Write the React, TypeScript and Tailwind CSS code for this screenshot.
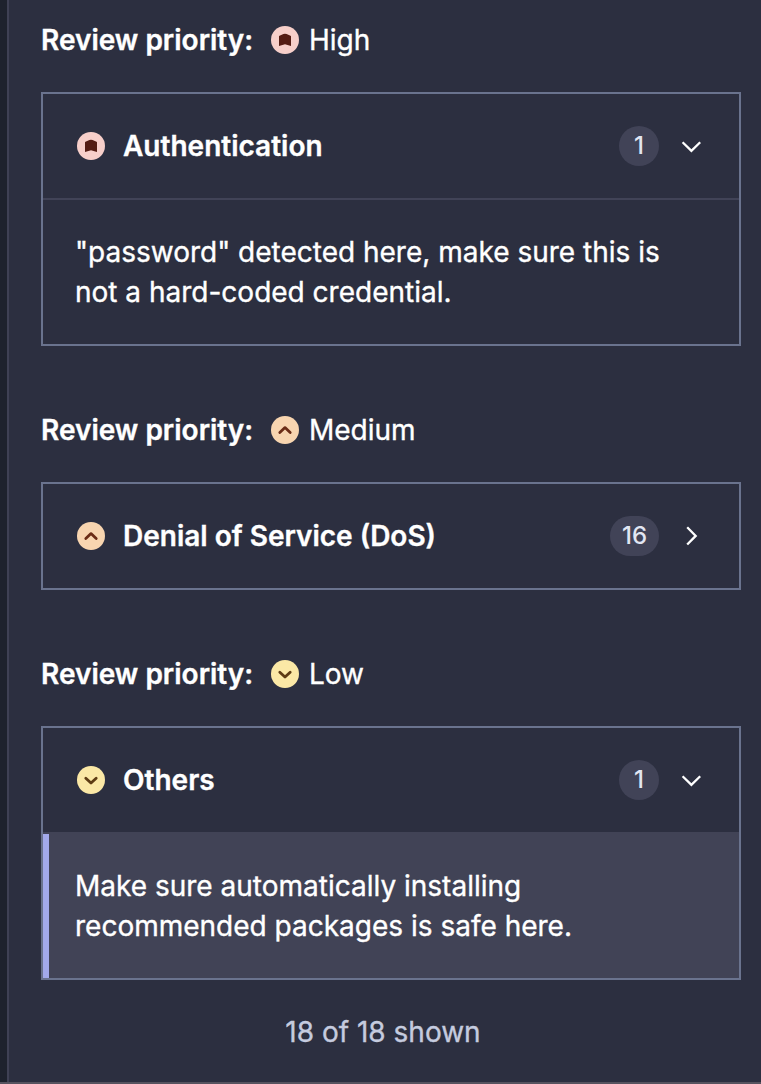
import type { ReactNode } from 'react';

type Level = 'High' | 'Medium' | 'Low';

function LevelIcon({ level }: { level: Level }) {
  return (
    <svg width="28" height="28" viewBox="0 0 28 28" fill="none" className="shrink-0">
      {level === 'High' && (
        <>
          <circle cx="14" cy="14" r="14" fill="#f7cfca" />
          <path d="M8 10.4Q8 9.9 8.5 9.7L12.4 8Q14 7.5 15.6 8L19.5 9.7Q20 9.9 20 10.4V20.1L14 18.2L8 20.1Z" fill="#541c13" />
        </>
      )}
      {level === 'Medium' && (
        <>
          <circle cx="14" cy="14" r="14" fill="#f8d5b0" />
          <path d="M8.8 16.5L14 11.6L19.2 16.5" stroke="#6b2c16" strokeWidth="2.8" strokeLinecap="round" strokeLinejoin="round" />
        </>
      )}
      {level === 'Low' && (
        <>
          <circle cx="14" cy="14" r="14" fill="#fbe8a6" />
          <path d="M8.8 12.2L14 17.1L19.2 12.2" stroke="#5e3c14" strokeWidth="2.8" strokeLinecap="round" strokeLinejoin="round" />
        </>
      )}
    </svg>
  );
}

function Chevron({ open }: { open: boolean }) {
  return (
    <svg width="32" height="32" viewBox="0 0 32 32" fill="none" className="shrink-0">
      <path
        d={open ? 'M7.6 12.2L16.4 20.9L25.2 12.2' : 'M12.2 7.3L20.7 15.9L12.2 24.5'}
        stroke="#ffffff"
        strokeWidth="2.3"
      />
    </svg>
  );
}

interface GroupProps {
  level: Level;
  title: string;
  count: number;
  children?: ReactNode;
}

function Group({ level, title, count, children }: GroupProps) {
  return (
    <section className="mb-16">
      <h2 className="flex h-10 items-center">
        <span className="w-[230px] whitespace-nowrap font-semibold">Review priority:</span>
        <LevelIcon level={level} />
        <span className="ml-2.5">{level}</span>
      </h2>
      <div className="mt-8 border-2 border-[#6a738e]">
        <div className="flex h-26 items-center pr-8 pl-[34px]">
          <LevelIcon level={level} />
          <span className="ml-[18px] grow font-semibold">{title}</span>
          <span className="mr-4 flex h-10 min-w-10 items-center justify-center rounded-full bg-[#414357] px-3 text-2xl font-medium text-[#e1e6f3] [-webkit-text-stroke:0]">
            {count}
          </span>
          <Chevron open={!!children} />
        </div>
        {children}
      </div>
    </section>
  );
}

export default function App() {
  return (
    <div className="flex h-[1084px] w-[761px] overflow-hidden border-b-2 border-[#56535f] bg-[#1e222d] pl-[7px] font-['Inter',sans-serif] text-[28px] leading-10 text-white antialiased [-webkit-text-stroke:0.35px_currentColor]">
      <main className="grow border-l-2 border-[#3f4154] bg-[#2c2f40] pt-5 pr-5 pl-8">
        <Group level="High" title="Authentication" count={1}>
          <p className="border-t-2 border-[#414357] py-8 pl-8">
            "password" detected here, make sure this is
            <br />
            not a hard-coded credential.
          </p>
        </Group>
        <Group level="Medium" title="Denial of Service (DoS)" count={16} />
        <Group level="Low" title="Others" count={1}>
          <div className="bg-[#414356] pt-0.5">
            <p className="border-l-[6px] border-[#a2a9ea] py-8 pl-[26px]">
              Make sure automatically installing
              <br />
              recommended packages is safe here.
            </p>
          </div>
        </Group>
        <p className="-mt-8 -mr-4 -ml-8 text-center text-[#c5cbdf] [-webkit-text-stroke:0.35px_#c5cbdf]">18 of 18 shown</p>
      </main>
    </div>
  );
}
